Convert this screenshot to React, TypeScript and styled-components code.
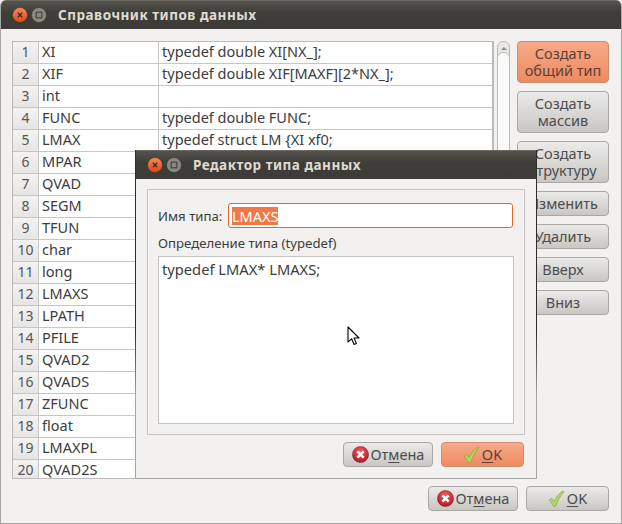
import styled, { createGlobalStyle } from "styled-components";

const rows = [
  ["XI", "typedef double XI[NX_];"],
  ["XIF", "typedef double XIF[MAXF][2*NX_];"],
  ["int", ""],
  ["FUNC", "typedef double FUNC;"],
  ["LMAX", "typedef struct LM {XI xf0;"],
  ["MPAR", ""],
  ["QVAD", ""],
  ["SEGM", ""],
  ["TFUN", ""],
  ["char", ""],
  ["long", ""],
  ["LMAXS", ""],
  ["LPATH", ""],
  ["PFILE", ""],
  ["QVAD2", ""],
  ["QVADS", ""],
  ["ZFUNC", ""],
  ["float", ""],
  ["LMAXPL", ""],
  ["QVAD2S", ""],
];

const GlobalStyle = createGlobalStyle`
  html, body {
    margin: 0;
    padding: 0;
    background: #f2f1f0;
  }
  body {
    font-family: "Noto Sans", "Open Sans", sans-serif;
    font-size: 14.5px;
    color: #3c3c3c;
  }
`;

const Window = styled.div`
  position: relative;
  width: 622px;
  height: 524px;
  box-sizing: border-box;
  display: flex;
  flex-direction: column;
  background: #f2f1f0;
  border-left: 1px solid #a8a6a2;
  border-right: 1px solid #a8a6a2;
  border-bottom: 1px solid #a8a6a2;
  border-radius: 6px 6px 0 0;
  overflow: hidden;
`;

const TitleBar = styled.div`
  height: 29px;
  flex: none;
  display: flex;
  align-items: center;
  padding-left: 11px;
  background: linear-gradient(#55534c, #3f3e39 40%, #3c3b37);
  border-top: 1px solid #6a6963;
  box-sizing: border-box;
`;

const Controls = styled.div`
  display: flex;
  gap: 3px;
  width: 46px;
  flex: none;
`;

const Title = styled.span`
  font-weight: 700;
  font-size: 13.5px;
  letter-spacing: 0.5px;
  color: #dfdbd2;
`;

const Main = styled.div`
  display: flex;
  padding: 12px 0 0 11px;
`;

const Table = styled.div`
  width: 482px;
  height: 438px;
  box-sizing: border-box;
  flex: none;
  overflow: hidden;
  background: #fff;
  border: 1px solid #bdbbb8;
  border-right-width: 2px;
`;

const Row = styled.div`
  display: grid;
  grid-template-columns: 26px 120px 1fr;
  height: 22px;
  box-sizing: border-box;
  border-bottom: 1px solid #c8c6c3;
  line-height: 19px;
`;

const RowHeader = styled.div`
  background: linear-gradient(#f4f3f2, #e6e5e3);
  border-right: 1px solid #c8c6c3;
  color: #555;
  text-align: center;
  font-size: 14px;
`;

const Cell = styled.div`
  padding-left: 3px;
  white-space: nowrap;
  overflow: hidden;
  border-right: ${(p: { $divider?: boolean }) => (p.$divider ? "1px solid #c8c6c3" : "none")};
`;

const Scrollbar = styled.div`
  width: 13px;
  height: 160px;
  flex: none;
  box-sizing: border-box;
  margin-left: 3px;
  background: #e9e8e6;
  border: 1px solid #bdbbb8;
  border-radius: 6px;
  display: flex;
  flex-direction: column;
  align-items: center;
  padding-top: 5px;
`;

const ScrollArrow = styled.div`
  width: 0;
  height: 0;
  border-left: 3px solid transparent;
  border-right: 3px solid transparent;
  border-bottom: 3px solid #8f8d89;
`;

const ScrollThumb = styled.div`
  width: 13px;
  flex: 1;
  margin-top: 2px;
  box-sizing: border-box;
  background: #fbfafa;
  border: 1px solid #bdbbb8;
  border-radius: 6px;
`;

const Side = styled.div`
  margin-left: 7px;
  width: 92px;
  flex: none;
  display: flex;
  flex-direction: column;
`;

const Button = styled.div<{ $accent?: boolean; $tall?: boolean; $gap?: number; $w?: number }>`
  width: ${(p) => p.$w ?? 92}px;
  height: ${(p) => (p.$tall ? 42 : 25)}px;
  margin-bottom: ${(p) => p.$gap ?? 8}px;
  box-sizing: border-box;
  flex: none;
  display: flex;
  align-items: center;
  justify-content: center;
  gap: 2px;
  text-align: center;
  line-height: 17px;
  font-size: 14.5px;
  color: ${(p) => (p.$accent ? "#5c4136" : "#4c4c4c")};
  border: 1px solid ${(p) => (p.$accent ? "#c98e74" : "#aaa8a5")};
  border-radius: 4px;
  background: ${(p) =>
    p.$accent
      ? "linear-gradient(#f7aa8a, #ee8a60)"
      : "linear-gradient(#ebeae8, #c8c7c4)"};
`;

const Footer = styled.div`
  display: flex;
  justify-content: flex-end;
  gap: 8px;
  padding: 7px 12px 0 0;
`;

const Key = styled.span`
  text-decoration: underline;
  text-underline-offset: 2px;
`;

const Dialog = styled.div`
  position: absolute;
  left: 134px;
  top: 150px;
  width: 402px;
  height: 329px;
  box-sizing: border-box;
  display: flex;
  flex-direction: column;
  background: #f2f1f0;
  border-left: 1px solid #3c3b37;
  border-right: 1px solid #2e2d2a;
  border-bottom: 1px solid #a8a6a2;
  border-image: linear-gradient(#2e2d2a, #2e2d2a 55%, #a8a6a2 75%) 1;
`;

const Frame = styled.div`
  margin: 10px 11px 0 11px;
  height: 246px;
  box-sizing: border-box;
  border: 1px solid #c6c4c1;
  padding: 13px 10px 10px 10px;
  display: flex;
  flex-direction: column;
`;

const NameRow = styled.div`
  display: flex;
  align-items: center;
  justify-content: space-between;
  font-size: 13.2px;
  white-space: nowrap;
`;

const NameInput = styled.div`
  width: 285px;
  height: 25px;
  flex: none;
  margin-right: 1px;
  box-sizing: border-box;
  background: #fff;
  border: 1px solid #e2672d;
  border-radius: 3px;
  padding: 2px 3px;
  display: flex;
  align-items: center;
`;

const Selected = styled.span`
  background: #f07746;
  color: #fff;
  line-height: 18px;
  font-size: 14.5px;
`;

const DefLabel = styled.div`
  margin-top: 6px;
  font-size: 13.2px;
  line-height: 18px;
`;

const Editor = styled.div`
  margin-top: 4px;
  flex: 1;
  background: #fff;
  border: 1px solid #c6c4c1;
  padding: 2px 3px;
  line-height: 20px;
  font-size: 14.7px;
`;

const DialogButtons = styled.div`
  display: flex;
  justify-content: flex-end;
  gap: 8px;
  padding: 7px 12px 0 0;
`;

const Pointer = styled.svg`
  position: absolute;
  left: 346px;
  top: 326px;
`;

const CloseIcon = () => (
  <svg width="16" height="16" viewBox="0 0 16 16">
    <defs>
      <linearGradient id="closeFill" x1="0" y1="0" x2="0" y2="1">
        <stop offset="0" stopColor="#f58a5a" />
        <stop offset="1" stopColor="#d8481c" />
      </linearGradient>
    </defs>
    <circle cx="8" cy="8" r="7.5" fill="url(#closeFill)" stroke="#33312d" strokeWidth="0.5" />
    <path d="M5.8 5.8l4.4 4.4M10.2 5.8l-4.4 4.4" stroke="#4a2413" strokeWidth="1.3" />
  </svg>
);

const MinIcon = () => (
  <svg width="16" height="16" viewBox="0 0 16 16">
    <circle cx="8" cy="8" r="7.5" fill="#8a8880" stroke="#33312d" strokeWidth="0.5" />
    <rect x="5.2" y="5.2" width="5.6" height="5.6" fill="none" stroke="#45443f" strokeWidth="1.2" />
  </svg>
);

const CancelIcon = () => (
  <svg width="17" height="17" viewBox="0 0 16 16">
    <defs>
      <radialGradient id="cancelFill" cx="0.5" cy="0.3" r="0.8">
        <stop offset="0" stopColor="#ef5a5a" />
        <stop offset="1" stopColor="#a5121c" />
      </radialGradient>
    </defs>
    <circle cx="8" cy="8" r="7.6" fill="url(#cancelFill)" stroke="#8e1a20" strokeWidth="0.5" />
    <path d="M5 5l6 6M11 5l-6 6" stroke="#fff" strokeWidth="2.4" />
  </svg>
);

const OkIcon = () => (
  <svg width="17" height="17" viewBox="0 0 16 16">
    <path
      d="M1 9.5l2.6-1.6 2.2 3C8 6.6 10.5 3 14 .8l1 .6C12 5 9 10 7 15.5H5.2C4 13 2.6 11 1 9.5z"
      fill="#b4d85c"
      stroke="#7d9f35"
      strokeWidth="0.6"
    />
  </svg>
);

const WindowControls = () => (
  <Controls>
    <CloseIcon />
    <MinIcon />
  </Controls>
);

const CancelButton = () => (
  <Button $w={90} $gap={0}>
    <CancelIcon />
    <span>
      От<Key>м</Key>ена
    </span>
  </Button>
);

const OkButton = ({ accent }: { accent?: boolean }) => (
  <Button $w={83} $gap={0} $accent={accent}>
    <OkIcon />
    <span>
      <Key>O</Key>K
    </span>
  </Button>
);

export default function App() {
  return (
    <>
      <GlobalStyle />
      <Window>
        <TitleBar>
          <WindowControls />
          <Title>Справочник типов данных</Title>
        </TitleBar>
        <Main>
          <Table>
            {rows.map(([name, def], i) => (
              <Row key={name}>
                <RowHeader>{i + 1}</RowHeader>
                <Cell $divider>{name}</Cell>
                <Cell>{def}</Cell>
              </Row>
            ))}
          </Table>
          <Scrollbar>
            <ScrollArrow />
            <ScrollThumb />
          </Scrollbar>
          <Side>
            <Button $tall $accent>
              <span>
                Создать
                <br />
                общий тип
              </span>
            </Button>
            <Button $tall>
              <span>
                Создать
                <br />
                массив
              </span>
            </Button>
            <Button $tall>
              <span>
                Создать
                <br />
                структуру
              </span>
            </Button>
            <Button>Изменить</Button>
            <Button>Удалить</Button>
            <Button>Вверх</Button>
            <Button>Вниз</Button>
          </Side>
        </Main>
        <Footer>
          <CancelButton />
          <OkButton />
        </Footer>
        <Dialog>
          <TitleBar>
            <WindowControls />
            <Title>Редактор типа данных</Title>
          </TitleBar>
          <Frame>
            <NameRow>
              <span>Имя типа:</span>
              <NameInput>
                <Selected>LMAXS</Selected>
              </NameInput>
            </NameRow>
            <DefLabel>Определение типа (typedef)</DefLabel>
            <Editor>typedef LMAX* LMAXS;</Editor>
          </Frame>
          <DialogButtons>
            <CancelButton />
            <OkButton accent />
          </DialogButtons>
        </Dialog>
        <Pointer width="14" height="21" viewBox="0 0 14 21">
          <path
            d="M1 1v15l3.6-3.2 2.4 5.6 2.4-1-2.4-5.4h5z"
            fill="#fff"
            stroke="#000"
            strokeWidth="1.1"
            strokeLinejoin="round"
          />
        </Pointer>
      </Window>
    </>
  );
}
